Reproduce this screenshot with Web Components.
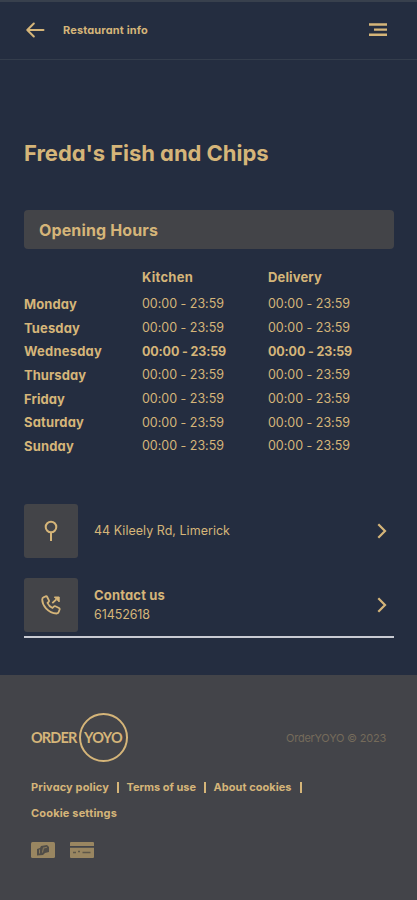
<!DOCTYPE html>
<html lang="en">
<head>
<meta charset="utf-8">
<title>Restaurant info</title>
<style>
  body {
    margin: 0;
    background: #242d40;
    color: #d5b579;
    font-family: Inter, "Open Sans", sans-serif;
    font-feature-settings: "cv11";
  }
</style>
</head>
<body>
<restaurant-page></restaurant-page>

<script>
// single line label, tracked so that it fills the width in its "fit" attribute
class FitText extends HTMLElement {
  constructor(){
    super();
    this.attachShadow({mode: 'open'});
    this.shadowRoot.innerHTML = `
<style>
  :host { display: block; white-space: nowrap; }
  span { display: inline-block; }
</style>
<span><slot></slot></span>`;
  }

  connectedCallback(){
    const span = this.shadowRoot.querySelector('span');
    const fit = parseFloat(this.getAttribute('fit'));
    const count = this.textContent.length;
    if (!fit || !count) return;
    const gap = (fit - span.getBoundingClientRect().width) / count;
    span.style.letterSpacing = `${gap.toFixed(3)}px`;
  }
}

class TopBar extends HTMLElement {
  constructor(){
    super();
    this.attachShadow({mode: 'open'});
    this.shadowRoot.innerHTML = `
<style>
  :host {
    display: flex;
    align-items: center;
    height: 60px;
    box-sizing: border-box;
    padding: 0 30px 1px 26px;
    border-top: 2px solid #38404d;
    border-bottom: 1px solid #343d4c;
    font-size: 11px;
    font-weight: 700;
  }
  .title { flex: 1; margin-left: 18px; }
  svg { display: block; }
</style>
<svg width="19" height="16" viewBox="0 0 19 16" fill="none" stroke="currentColor" stroke-width="2" stroke-linecap="round" stroke-linejoin="round"><path d="M17.500 8H1.500M7.800 1.500L1.300 8l6.500 6.500"/></svg>
<div class="title"><slot></slot></div>
<svg width="18" height="14" viewBox="0 0 18 14" fill="currentColor"><path d="M0 .3h18v2.400H0zM5 5.400h13v2.400H5zM0 10.500h18v2.400H0z"/></svg>`;
  }
}

class OpeningHours extends HTMLElement {
  constructor(){
    super();
    this.attachShadow({mode: 'open'});
    const days = [['Monday', 53], ['Tuesday', 56], ['Wednesday', 78], ['Thursday', 62], ['Friday', 41], ['Saturday', 60], ['Sunday', 50]];
    const rows = days.map(([day, width]) => {
      const today = day === 'Wednesday';
      const time = `<fit-text class="${today ? 'today' : 'time'}" fit="${today ? 84 : 82}">00:00 - 23:59</fit-text>`;
      return `<fit-text class="day" fit="${width}">${day}</fit-text>${time}${time}`;
    }).join('');
    this.shadowRoot.innerHTML = `
<style>
  :host { display: block; }
  .head {
    display: flex;
    align-items: center;
    height: 39px;
    padding-left: 15px;
    border-radius: 4px;
    background: #434448;
    font-size: 16px;
    font-weight: 700;
  }
  .grid {
    display: grid;
    grid-template-columns: 118px 126px 1fr;
    grid-template-rows: 31px repeat(7, 23.7px);
    align-items: center;
    margin-top: 12px;
    font-size: 12.5px;
  }
  .day, .col { font-size: 13px; font-weight: 700; }
  .today { font-weight: 700; }
</style>
<div class="head"><fit-text fit="119">Opening Hours</fit-text></div>
<div class="grid">
  <span></span><fit-text class="col" fit="51">Kitchen</fit-text><fit-text class="col" fit="54">Delivery</fit-text>
  ${rows}
</div>`;
  }
}

class InfoRow extends HTMLElement {
  constructor(){
    super();
    this.attachShadow({mode: 'open'});
    this.shadowRoot.innerHTML = `
<style>
  :host {
    display: flex;
    align-items: center;
    height: 54px;
    padding-right: 7px;
    font-size: 12.5px;
    line-height: 19px;
  }
  .tile {
    display: grid;
    place-items: center;
    width: 54px;
    height: 54px;
    border-radius: 3px;
    background: #434448;
  }
  .text { flex: 1; margin-left: 16px; }
  svg { display: block; }
</style>
<div class="tile"><slot name="icon"></slot></div>
<div class="text"><slot></slot></div>
<svg width="10" height="16" viewBox="0 0 10 16" fill="none" stroke="currentColor" stroke-width="2.2"><path d="M1.300 1.300L8 8l-6.700 6.700"/></svg>`;
  }
}

class OrderLogo extends HTMLElement {
  constructor(){
    super();
    this.attachShadow({mode: 'open'});
    this.shadowRoot.innerHTML = `
<style>
  :host {
    display: flex;
    align-items: center;
    font: 700 14.5px Lato, sans-serif;
  }
  .ring {
    display: grid;
    place-items: center;
    box-sizing: border-box;
    width: 49px;
    height: 49px;
    margin-left: 2px;
    border: 2px solid;
    border-radius: 50%;
  }
</style>
<fit-text fit="45.500">ORDER</fit-text>
<div class="ring"><fit-text fit="38">YOYO</fit-text></div>`;
  }
}

class PageFooter extends HTMLElement {
  constructor(){
    super();
    this.attachShadow({mode: 'open'});
    this.shadowRoot.innerHTML = `
<style>
  :host {
    display: block;
    height: 225px;
    box-sizing: border-box;
    padding: 38px 31px 0;
    background: #434449;
  }
  .brand { display: flex; align-items: center; justify-content: space-between; }
  .copy { color: #756b5b; font-size: 11px; }
  .links {
    display: flex;
    flex-wrap: wrap;
    align-items: center;
    margin-top: 12px;
    font-size: 11px;
    font-weight: 700;
    line-height: 26px;
  }
  i { width: 2px; height: 11px; margin: 0 7.500px 0 8px; background: currentColor; }
  .cards { display: flex; gap: 15px; margin-top: 16px; color: #998661; }
  svg { display: block; }
</style>
<div class="brand">
  <order-logo></order-logo>
  <fit-text class="copy" fit="100">OrderYOYO © 2023</fit-text>
</div>
<div class="links">
  <fit-text fit="78">Privacy policy</fit-text><i></i>
  <fit-text fit="69.500">Terms of use</fit-text><i></i>
  <fit-text fit="78">About cookies</fit-text><i></i>
  <fit-text fit="86">Cookie settings</fit-text>
</div>
<div class="cards">
  <svg width="24" height="16" viewBox="0 0 24 16">
    <rect width="24" height="16" rx="1.500" fill="currentColor"/>
    <path d="M6 7l3-1 1-2 6-1 2 2v5l-4 1-2 2-6 .5z" fill="#504d48"/>
    <path d="M8.500 7.500v4M12.500 5.500l-1 5M13 6l3-.8" stroke="currentColor" stroke-width=".8"/>
  </svg>
  <svg width="24" height="16" viewBox="0 0 24 16">
    <path d="M1 0h22q1 0 1 1v3H0V1q0-1 1-1zM0 5.800h24V15q0 1-1 1H1q-1 0-1-1z" fill="currentColor"/>
    <path d="M3 10.500h3M8 9.500h2M12.500 10.500h8" stroke="#5e574a" stroke-width="1.500"/>
  </svg>
</div>`;
  }
}

class RestaurantPage extends HTMLElement {
  constructor(){
    super();
    this.attachShadow({mode: 'open'});
    this.shadowRoot.innerHTML = `
<style>
  :host { display: flex; flex-direction: column; height: 900px; }
  main { flex: 1; padding: 0 23px 0 24px; }
  h1 { margin: 78px 0 42px; font-size: 22px; font-weight: 700; line-height: 30px; }
  .info {
    display: grid;
    gap: 20px;
    margin-top: 46px;
    padding-bottom: 4px;
    border-bottom: 2px solid #c9cbd3;
  }
  b { font-size: 13px; font-weight: 700; }
</style>
<top-bar><fit-text fit="85">Restaurant info</fit-text></top-bar>
<main>
  <h1><fit-text fit="244.500">Freda's Fish and Chips</fit-text></h1>
  <opening-hours></opening-hours>
  <div class="info">
    <info-row>
      <svg slot="icon" width="14" height="22" viewBox="0 0 14 22" fill="none" stroke="currentColor" stroke-width="2"><circle cx="7" cy="7" r="5.300"/><path d="M7 12.300V21"/></svg>
      <fit-text fit="136">44 Kileely Rd, Limerick</fit-text>
    </info-row>
    <info-row>
      <svg slot="icon" width="20" height="20" viewBox="0 0 20 20" fill="none" stroke="currentColor" stroke-width="1.800" stroke-linejoin="round"><path d="M2.800 2.200L4.600 1.400q1.100-.4 1.600.6l1.700 3.300q.4.900-.3 1.600L6.500 8q1.600 3.500 5 5l1.300-1.400q.7-.7 1.600-.3l3.600 1.700q.9.500.6 1.500l-.8 2.200q-.5 1.700-2.200 1.800Q9.500 18.200 5 13.300 1.200 9 1.200 4.500q0-1.700 1.600-2.300z"/><path d="M11.300 8.200l4-3.800"/><path d="M13.300 2h4.900v4.900z" fill="currentColor" stroke-width="1"/></svg>
      <b><fit-text fit="71">Contact us</fit-text></b>
      <fit-text fit="56">61452618</fit-text>
    </info-row>
  </div>
</main>
<page-footer></page-footer>`;
  }
}

window.customElements.define('fit-text', FitText);
window.customElements.define('top-bar', TopBar);
window.customElements.define('opening-hours', OpeningHours);
window.customElements.define('info-row', InfoRow);
window.customElements.define('order-logo', OrderLogo);
window.customElements.define('page-footer', PageFooter);
window.customElements.define('restaurant-page', RestaurantPage);
</script>
</body>
</html>
